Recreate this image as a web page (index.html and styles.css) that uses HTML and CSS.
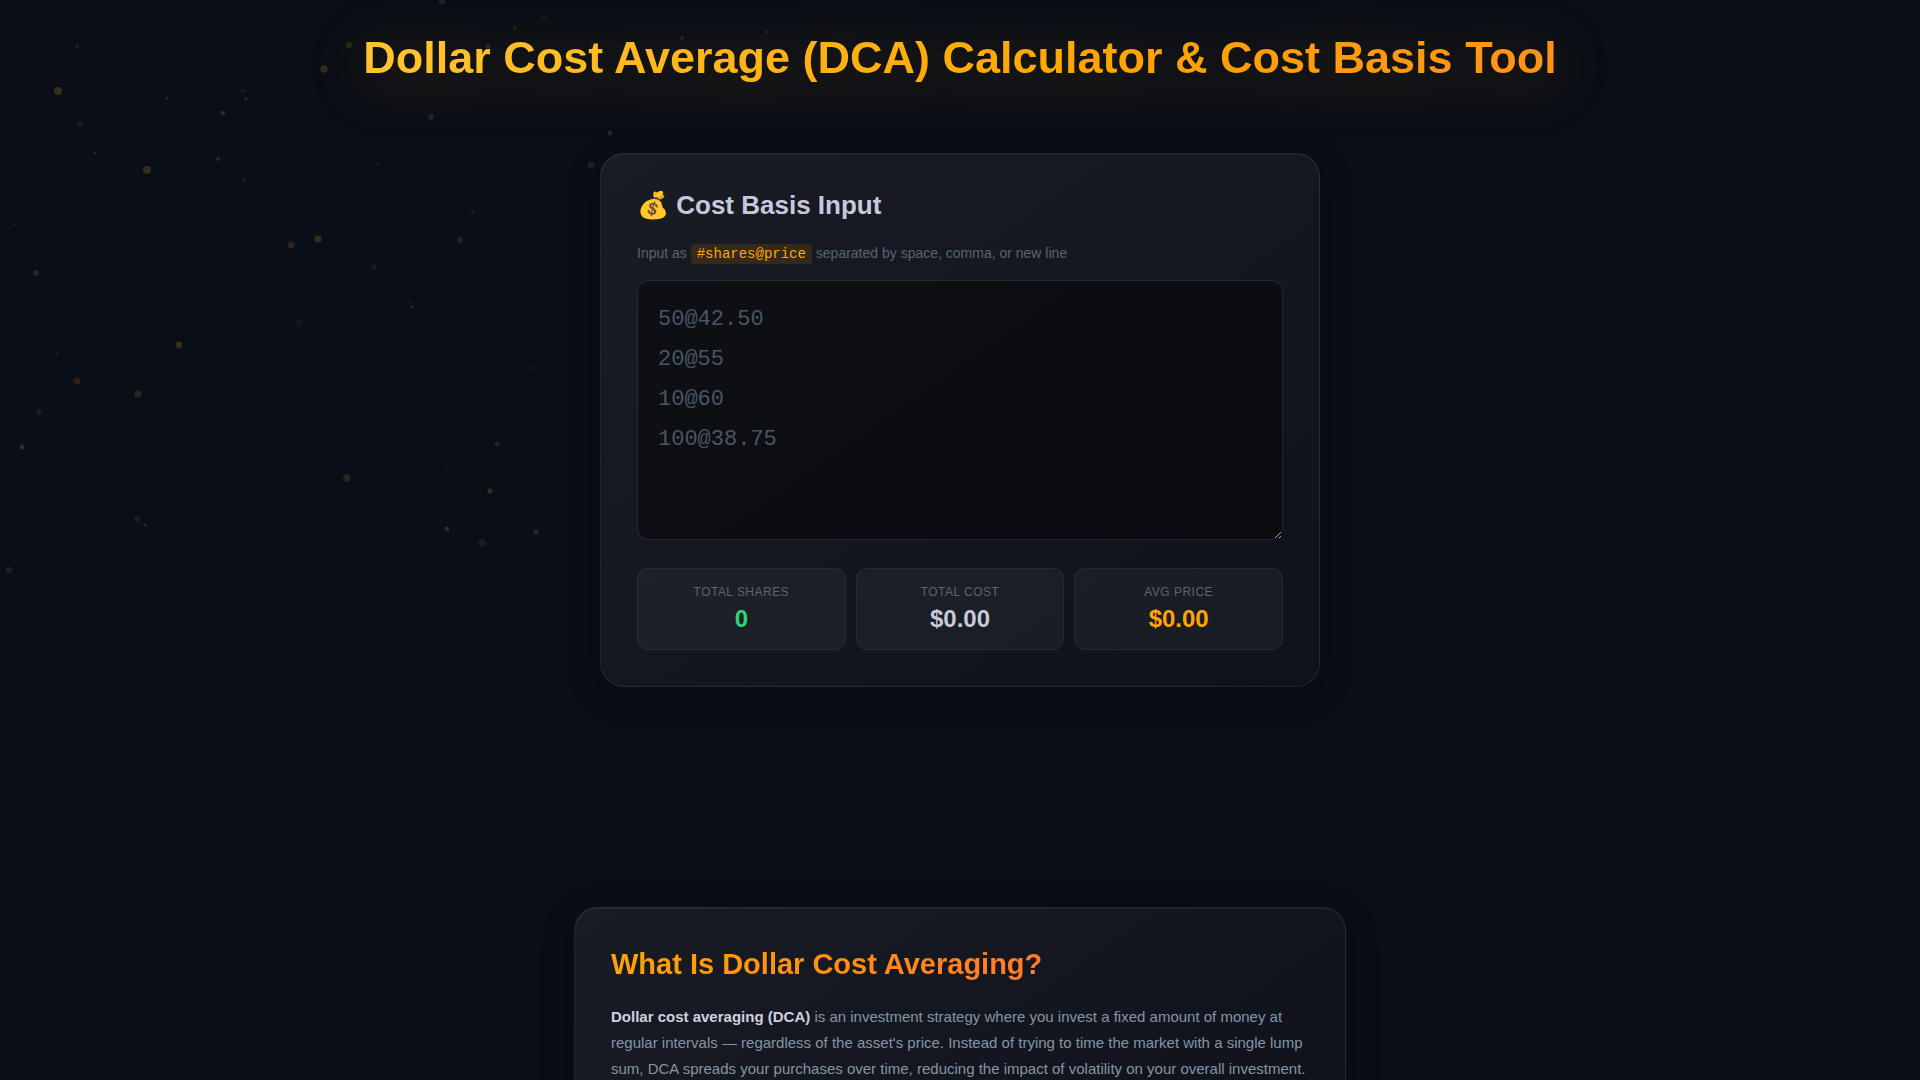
FILE: index.html
```
<!DOCTYPE html>
<html lang="en">
<head>
  <meta charset="UTF-8">
  <meta name="viewport" content="width=device-width, initial-scale=1">
  <title>Dollar Cost Average (DCA) Calculator &amp; Cost Basis Tool</title>
  <link rel="stylesheet" href="styles.css">
</head>
<body>

<svg class="particles" width="800" height="600" aria-hidden="true">
  <g fill="#ffc83c">
    <circle cx="58" cy="91" r="4" opacity=".18"/>
    <circle cx="147" cy="170" r="4" opacity=".17"/>
    <circle cx="80" cy="124" r="3" opacity=".08"/>
    <circle cx="167" cy="98" r="1.5" opacity=".13"/>
    <circle cx="14" cy="225" r="1" opacity=".12"/>
    <circle cx="36" cy="273" r="3" opacity=".13"/>
    <circle cx="243" cy="91" r="2" opacity=".07"/>
    <circle cx="223" cy="113" r="2.3" opacity=".15"/>
    <circle cx="244" cy="180" r="1.2" opacity=".14"/>
    <circle cx="318" cy="239" r="3.6" opacity=".17"/>
    <circle cx="349" cy="45" r="3.2" opacity=".12"/>
    <circle cx="324" cy="69" r="3.8" opacity=".16"/>
    <circle cx="431" cy="117" r="2.7" opacity=".12"/>
    <circle cx="544" cy="17" r="2.7" opacity=".05"/>
    <circle cx="592" cy="43" r="2.5" opacity=".05"/>
    <circle cx="378" cy="164" r="1" opacity=".14"/>
    <circle cx="473" cy="211" r="2" opacity=".07"/>
    <circle cx="374" cy="267" r="2.8" opacity=".08"/>
    <circle cx="156" cy="344" r="1" opacity=".12"/>
    <circle cx="179" cy="345" r="3.4" opacity=".18"/>
    <circle cx="138" cy="394" r="3.5" opacity=".13"/>
    <circle cx="22" cy="447" r="2.4" opacity=".18"/>
    <circle cx="137" cy="519" r="3.2" opacity=".07"/>
    <circle cx="145" cy="525" r="1.4" opacity=".15"/>
    <circle cx="9" cy="570" r="3.1" opacity=".11"/>
    <circle cx="533" cy="368" r="2" opacity=".06"/>
    <circle cx="347" cy="478" r="3.8" opacity=".13"/>
    <circle cx="490" cy="491" r="2.6" opacity=".18"/>
    <circle cx="447" cy="529" r="2.4" opacity=".17"/>
    <circle cx="482" cy="543" r="3.7" opacity=".08"/>
  </g>
  <g fill="#ff8a4a">
    <circle cx="77" cy="46" r="2" opacity=".11"/>
    <circle cx="95" cy="153" r="1.8" opacity=".14"/>
    <circle cx="168" cy="189" r="1.6" opacity=".06"/>
    <circle cx="136" cy="283" r="2.7" opacity=".04"/>
    <circle cx="246" cy="99" r="1.4" opacity=".2"/>
    <circle cx="218" cy="159" r="2" opacity=".17"/>
    <circle cx="291" cy="245" r="3.6" opacity=".17"/>
    <circle cx="272" cy="67" r="2" opacity=".05"/>
    <circle cx="442" cy="1" r="3.4" opacity=".13"/>
    <circle cx="515" cy="28" r="2" opacity=".1"/>
    <circle cx="488" cy="46" r="2.3" opacity=".16"/>
    <circle cx="682" cy="38" r="2" opacity=".14"/>
    <circle cx="767" cy="32" r="1.7" opacity=".12"/>
    <circle cx="610" cy="133" r="2.5" opacity=".18"/>
    <circle cx="591" cy="165" r="3.3" opacity=".13"/>
    <circle cx="460" cy="240" r="3" opacity=".14"/>
    <circle cx="299" cy="322" r="3.7" opacity=".05"/>
    <circle cx="57" cy="353" r="1.6" opacity=".11"/>
    <circle cx="77" cy="381" r="3.6" opacity=".14"/>
    <circle cx="39" cy="412" r="2.9" opacity=".1"/>
    <circle cx="410" cy="302" r="2.7" opacity=".04"/>
    <circle cx="412" cy="307" r="1.5" opacity=".17"/>
    <circle cx="497" cy="444" r="2.4" opacity=".14"/>
    <circle cx="445" cy="468" r="2.5" opacity=".04"/>
    <circle cx="392" cy="504" r="1.4" opacity=".14"/>
    <circle cx="536" cy="532" r="2.6" opacity=".15"/>
  </g>
</svg>

<h1 class="page-title">Dollar Cost Average (DCA) Calculator &amp; Cost Basis Tool</h1>

<main>
  <section class="card calculator">
    <h2><label for="entries">💰 Cost Basis Input</label></h2>
    <p class="hint">Input as <code>#shares@price</code> separated by space, comma, or new line</p>
    <textarea id="entries" placeholder="50@42.50&#10;20@55&#10;10@60&#10;100@38.75"></textarea>

    <div class="stats">
      <div class="stat">
        <div class="stat-label">Total Shares</div>
        <div class="stat-value shares" id="totalShares">0</div>
      </div>
      <div class="stat">
        <div class="stat-label">Total Cost</div>
        <div class="stat-value" id="totalCost">$0.00</div>
      </div>
      <div class="stat">
        <div class="stat-label">Avg Price</div>
        <div class="stat-value price" id="avgPrice">$0.00</div>
      </div>
    </div>
  </section>

  <article class="card info">
    <h2>What Is Dollar Cost Averaging?</h2>
    <p><strong>Dollar cost averaging (DCA)</strong> is an investment strategy where you invest a fixed amount of money at regular intervals — regardless of the asset's price. Instead of trying to time the market with a single lump sum, DCA spreads your purchases over time, reducing the impact of volatility on your overall investment.</p>
  </article>
</main>

<script>
const entries = document.getElementById('entries');

function money(n) {
  return '$' + n.toLocaleString('en-US', { minimumFractionDigits: 2, maximumFractionDigits: 2 });
}

function calculate() {
  let shares = 0;
  let cost = 0;
  entries.value.split(/[\s,]+/).forEach(entry => {
    const [count, price] = entry.split('@').map(parseFloat);
    if (isNaN(count) || isNaN(price)) return;
    shares += count;
    cost += count * price;
  });
  document.getElementById('totalShares').innerText = shares.toLocaleString('en-US');
  document.getElementById('totalCost').innerText = money(cost);
  document.getElementById('avgPrice').innerText = money(shares ? cost / shares : 0);
}

entries.addEventListener('input', calculate);
</script>

</body>
</html>
```
FILE: styles.css
```
* {
  box-sizing: border-box;
}
body {
  margin: 0;
  padding: 31px 20px 0;
  min-height: 100vh;
  overflow-x: hidden;
  background: #0a0e16;
  color: #c8c8dc;
  font-family: "Liberation Sans", Arial, sans-serif;
}
h1, h2, p {
  margin: 0;
}
.particles {
  position: absolute;
  top: 0;
  left: 0;
  z-index: -1;
  pointer-events: none;
}
.page-title {
  max-width: 1400px;
  margin: 0 auto 68px;
  font-size: 45px;
  line-height: 54px;
  text-align: center;
  color: transparent;
  background: linear-gradient(135deg, #ffca38, #ffa500 60%, #ff8c20);
  -webkit-background-clip: text;
  background-clip: text;
  filter: drop-shadow(0 8px 28px rgba(255, 165, 0, 0.25));
}
.card {
  margin: 0 auto;
  padding: 36px;
  border: 1px solid rgba(255, 255, 255, 0.08);
  border-radius: 24px;
  background: linear-gradient(145deg, #191c24, #14171f 50%, #10121b);
  box-shadow: 0 8px 32px rgba(0, 0, 0, 0.3), inset 0 1px 0 rgba(255, 255, 255, 0.05);
}
.calculator {
  max-width: 720px;
  margin-bottom: 220px;
}
.calculator h2 {
  margin-bottom: 21px;
  font-size: 26px;
  line-height: 30px;
}
.hint {
  margin-bottom: 14px;
  font-size: 14px;
  line-height: 24px;
  color: #576574;
}
.hint code {
  padding: 2px 6px;
  border-radius: 4px;
  background: rgba(255, 165, 0, 0.12);
  color: #ffa500;
  font-family: "Liberation Mono", monospace;
  font-size: 14px;
}
textarea {
  display: block;
  width: 100%;
  height: 260px;
  padding: 19px 20px;
  border: 1px solid rgba(255, 255, 255, 0.1);
  border-radius: 12px;
  outline: none;
  resize: vertical;
  background: rgba(0, 0, 0, 0.4);
  color: #c8c8dc;
  font-family: "Liberation Mono", monospace;
  font-size: 22px;
  line-height: 40px;
}
textarea::placeholder {
  color: #485665;
}
.stats {
  display: grid;
  grid-template-columns: repeat(3, 1fr);
  gap: 10px;
  margin-top: 28px;
}
.stat {
  padding: 14px 12px 12px;
  border: 1px solid rgba(255, 255, 255, 0.06);
  border-radius: 12px;
  background: rgba(255, 255, 255, 0.04);
  text-align: center;
}
.stat-label {
  font-size: 12px;
  line-height: 18px;
  letter-spacing: 0.04em;
  text-transform: uppercase;
  color: #576574;
}
.stat-value {
  font-size: 24px;
  line-height: 36px;
  font-weight: bold;
}
.shares {
  color: #2ed573;
}
.price {
  color: #ffa500;
}
.info {
  max-width: 772px;
}
.info h2 {
  margin-bottom: 20px;
  font-size: 29px;
  line-height: 40px;
  color: transparent;
  background: linear-gradient(135deg, #ffa500, #ff6b35 85%);
  -webkit-background-clip: text;
  background-clip: text;
}
.info p {
  font-size: 15px;
  line-height: 26px;
  color: #8395a7;
}
.info strong {
  color: #d0d0e0;
}
```
